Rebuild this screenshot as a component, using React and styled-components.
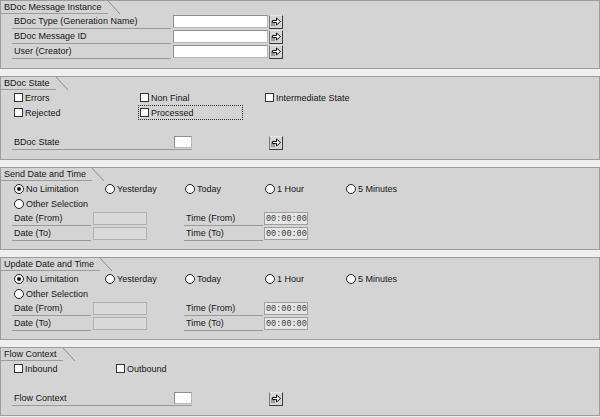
import React from 'react';
import styled, { createGlobalStyle, css } from 'styled-components';

const GlobalStyle = createGlobalStyle`
  html, body {
    margin: 0;
    padding: 0;
    background: #efefef;
  }
  body {
    font-family: "Liberation Sans", Arial, sans-serif;
    font-size: 9px;
    color: #141414;
  }
`;

const Page = styled.div`
  width: 600px;
  display: flex;
  flex-direction: column;
  gap: 7px;
`;

const Panel = styled.section`
  box-sizing: border-box;
  width: 600px;
  background: #d4d4d4;
  border: 1px solid #9c9c9c;
  padding-bottom: ${(p) => p.$pb ?? 9}px;
`;

const TabBar = styled.div`
  display: flex;
  height: 13px;
`;

const Tab = styled.div`
  box-sizing: border-box;
  height: 13px;
  line-height: 12px;
  padding: 0 6px 0 3px;
  border-bottom: 1px solid #9c9c9c;
  white-space: nowrap;
`;

const Slant = styled.div`
  width: 12px;
  height: 13px;
  background: linear-gradient(
    to top right,
    transparent calc(50% - 0.8px),
    #8e8e8e 50%,
    transparent calc(50% + 0.8px)
  );
`;

const Body = styled.div`
  padding-left: 11px;
`;

const Row = styled.div`
  display: flex;
  align-items: center;
  height: 15px;
`;

const Spacer = styled.div`
  height: 15px;
`;

const LabelCell = styled.div`
  box-sizing: border-box;
  width: ${(p) => p.$w}px;
  height: 15px;
  padding-left: 2px;
  border-bottom: 1px solid #9a9a9a;
  display: flex;
  align-items: center;
  justify-content: space-between;
  margin-left: ${(p) => p.$ml || 0}px;
  white-space: nowrap;
`;

const variants = {
  text: css`
    background: #ffffff;
    border-color: #8e8e8e #b8b8b8 #b8b8b8 #8e8e8e;
  `,
  disabled: css`
    background: #dadada;
    border-color: #b0b0b0;
  `,
  time: css`
    background: #e6e6e6;
    border-color: #a0a0a0;
    padding-left: 1px;
    font-family: "Liberation Mono", "Courier New", monospace;
    font-size: 8.5px;
    color: #3a3a3a;
  `,
};

const Field = styled.input`
  box-sizing: border-box;
  width: ${(p) => p.$w}px;
  height: ${(p) => p.$h || 13}px;
  margin: 0 0 0 ${(p) => p.$ml || 0}px;
  padding: 0 0 0 2px;
  border: 1px solid;
  font: 9px "Liberation Sans", Arial, sans-serif;
  outline: none;
  ${(p) => variants[p.$variant || 'text']}
`;

const ArrowButton = styled.button`
  box-sizing: border-box;
  width: 14px;
  height: 14px;
  padding: 0;
  margin-left: ${(p) => p.$ml || 0}px;
  background: #d4d4d4;
  border: 1px solid;
  border-color: #e8e8e8 #3a3a3a #3a3a3a #7a7a7a;
  display: flex;
  align-items: center;
  justify-content: center;
`;

const ArrowIcon = () => (
  <svg width="12" height="12" viewBox="0 0 12 12">
    <rect x="1" y="5" width="4" height="5" fill="#9a9a9a" />
    <polygon
      points="2.5,4.5 6.5,4.5 6.5,2 10.5,5.5 6.5,9 6.5,6.5 2.5,6.5"
      fill="#ffffff"
      stroke="#111"
      strokeWidth="1"
      strokeLinejoin="miter"
    />
  </svg>
);

const Options = styled.div`
  display: grid;
  grid-template-columns: ${(p) => p.$cols};
  grid-auto-rows: 15px;
`;

const Option = styled.label`
  box-sizing: border-box;
  display: flex;
  align-items: center;
  gap: 2px;
  height: 15px;
  padding-left: 1px;
  border: 1px dotted ${(p) => (p.$focused ? '#2a2a2a' : 'transparent')};
  width: ${(p) => (p.$w ? `${p.$w}px` : 'auto')};
  white-space: nowrap;
`;

const Box = styled.span`
  box-sizing: border-box;
  width: 9px;
  height: 9px;
  background: #fff;
  border: 1px solid #333;
`;

const Circle = styled.span`
  box-sizing: border-box;
  width: 10px;
  height: 10px;
  border-radius: 50%;
  background: #fff;
  border: 1px solid #222;
  display: flex;
  align-items: center;
  justify-content: center;
  &::after {
    content: '';
    width: 4px;
    height: 4px;
    border-radius: 50%;
    background: ${(p) => (p.$checked ? '#111' : 'transparent')};
  }
`;

const Check = ({ children, focused, w }) => (
  <Option $focused={focused} $w={w}>
    <Box />
    {children}
  </Option>
);

const Radio = ({ children, checked }) => (
  <Option>
    <Circle $checked={checked} />
    {children}
  </Option>
);

const Section = ({ title, pb, children }) => (
  <Panel $pb={pb}>
    <TabBar>
      <Tab>{title}</Tab>
      <Slant />
    </TabBar>
    <Body>{children}</Body>
  </Panel>
);

const InputRow = ({ label }) => (
  <Row>
    <LabelCell $w={159}>{label}</LabelCell>
    <Field $w={95} $ml={2} readOnly value="" />
    <ArrowButton $ml={1}>
      <ArrowIcon />
    </ArrowButton>
  </Row>
);

const SmallRow = ({ label }) => (
  <Row>
    <LabelCell $w={180}>
      {label}
      <Field $w={18} $h={12} readOnly value="" />
    </LabelCell>
    <ArrowButton $ml={77}>
      <ArrowIcon />
    </ArrowButton>
  </Row>
);

const DateRow = ({ which }) => (
  <Row>
    <LabelCell $w={79}>Date ({which})</LabelCell>
    <Field $w={54} $ml={2} $variant="disabled" readOnly value="" />
    <LabelCell $w={79} $ml={37}>Time ({which})</LabelCell>
    <Field $w={44} $ml={1} $variant="time" readOnly value="00:00:00" />
  </Row>
);

const periods = ['No Limitation', 'Yesterday', 'Today', '1 Hour', '5 Minutes'];

const DateTimeSection = ({ title }) => (
  <Section title={title} pb={8}>
    <Options $cols="91px 80px 80px 81px auto">
      {periods.map((p, i) => (
        <Radio key={p} checked={i === 0}>
          {p}
        </Radio>
      ))}
      <Radio>Other Selection</Radio>
    </Options>
    <DateRow which="From" />
    <DateRow which="To" />
  </Section>
);

export default function App() {
  return (
    <>
      <GlobalStyle />
      <Page>
        <Section title="BDoc Message Instance">
          <InputRow label="BDoc Type (Generation Name)" />
          <InputRow label="BDoc Message ID" />
          <InputRow label="User (Creator)" />
        </Section>

        <Section title="BDoc State">
          <Options $cols="126px 125px auto">
            <Check>Errors</Check>
            <Check>Non Final</Check>
            <Check>Intermediate State</Check>
            <Check>Rejected</Check>
            <Check focused w={105}>
              Processed
            </Check>
          </Options>
          <Spacer />
          <SmallRow label="BDoc State" />
        </Section>

        <DateTimeSection title="Send Date and Time" />
        <DateTimeSection title="Update Date and Time" />

        <Section title="Flow Context">
          <Options $cols="102px auto">
            <Check>Inbound</Check>
            <Check>Outbound</Check>
          </Options>
          <Spacer />
          <SmallRow label="Flow Context" />
        </Section>
      </Page>
    </>
  );
}
